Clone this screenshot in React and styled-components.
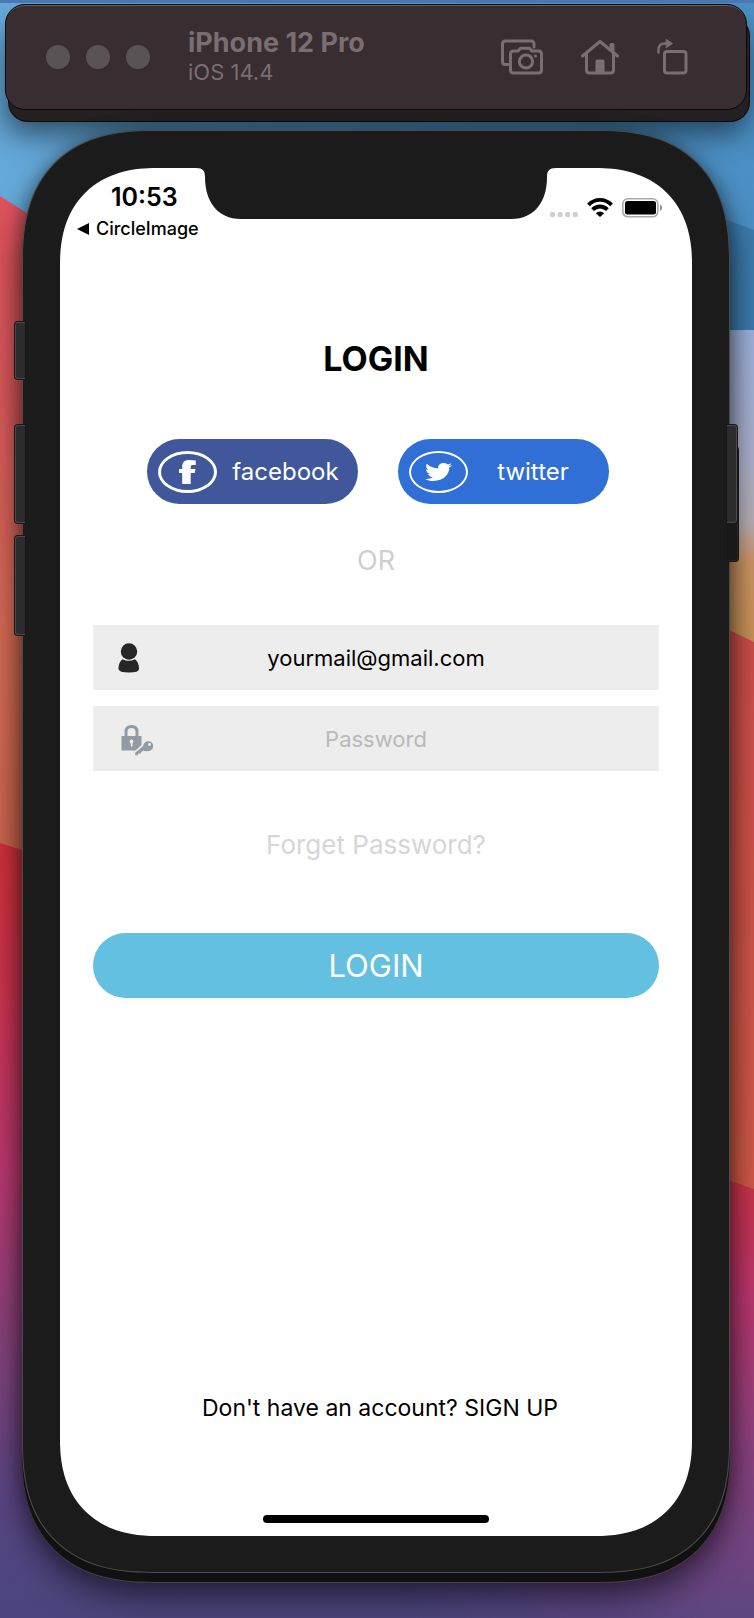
import React from "react";
import styled, { createGlobalStyle } from "styled-components";

const GlobalStyle = createGlobalStyle`
  * { box-sizing: border-box; }
  body { margin: 0; font-family: Inter, "Liberation Sans", sans-serif; }
  button, input { font: inherit; border: 0; margin: 0; padding: 0; background: none; cursor: pointer; }
  input { cursor: text; }
`;

const Desktop = styled.div`
  position: relative;
  min-height: 100vh;
  overflow: hidden;
  padding: 4px 0 45px;
  isolation: isolate;
`;

const WallpaperArt = styled.svg`
  position: absolute;
  inset: 0;
  width: 100%;
  height: 100%;
  z-index: -1;
`;

const Toolbar = styled.header`
  position: relative;
  display: flex;
  align-items: center;
  height: 106px;
  margin: 0 7px 0 5px;
  padding: 0 58px 0 40px;
  border-radius: 20px;
  border: 1px solid #0b090a;
  background: #382d31;
  box-shadow: inset 0 2px 0 -1px #6a6164, 3px 12px 0 -1px #241f21,
    3px 12px 0 0 #0d0c0d, 0 24px 30px rgba(0, 0, 0, 0.55);
`;

const WindowDots = styled.div`
  display: flex;
  gap: 16px;
  margin-right: 38px;
`;

const Dot = styled.button`
  width: 24px;
  height: 24px;
  border-radius: 50%;
  background: #5a5355;
`;

const DeviceTitle = styled.div`
  flex: 1;
  color: #7a6e73;
`;

const DeviceName = styled.div`
  font-size: 27px;
  line-height: 30px;
  font-weight: 700;
`;

const DeviceSystem = styled.div`
  font-size: 22px;
  line-height: 28px;
`;

const ToolGroup = styled.nav`
  display: flex;
  align-items: center;
  gap: 38px;
`;

const ToolButton = styled.button`
  display: flex;
  color: #7a6e73;
`;

const Phone = styled.main`
  position: relative;
  margin: 20px 24px 0 22px;
  padding: 37px 37px 36px;
  border: 1px solid #4c4c4e;
  border-radius: 116px;
  background: #1b1b1b;
  box-shadow: 0 9px 0 0 #111, 0 10px 0 0 #4b4050,
    0 22px 34px rgba(0, 0, 0, 0.6), 0 0 18px rgba(0, 0, 0, 0.35);

  @supports (corner-shape: superellipse(1.3)) {
    border-radius: 132px;
    corner-shape: superellipse(1.3);
  }
`;

const SideKey = styled.span`
  position: absolute;
  top: ${(p) => p.$top}px;
  height: ${(p) => p.$height}px;
  width: 10px;
  ${(p) => p.$side}: -8px;
  border-radius: ${(p) => (p.$side === "left" ? "3px 0 0 3px" : "0 3px 3px 0")};
  border: 1px solid #4a4a4a;
  border-${(p) => (p.$side === "left" ? "right" : "left")}: 0;
  background: #2c2c2c;
  box-shadow: 0 0 0 1px #161616;
`;

const KeyShade = styled(SideKey)`
  right: -9px;
  border-color: #222;
  background: #191919;
`;

const Screen = styled.section`
  display: flex;
  flex-direction: column;
  padding-bottom: 13px;
  border-radius: 84px;
  background: #fff;
  color: #000;

  @supports (corner-shape: superellipse(1.2)) {
    border-radius: 96px;
    corner-shape: superellipse(1.2);
  }
`;

const StatusBar = styled.div`
  display: grid;
  grid-template-columns: 1fr 342px 1fr;
  height: 84px;
`;

const StatusLeft = styled.div`
  padding: 13px 0 0 17px;
  white-space: nowrap;
`;

const Time = styled.div`
  padding-left: 34px;
  font-size: 25px;
  line-height: 32px;
  font-weight: 600;
`;

const BackLink = styled.a`
  display: flex;
  align-items: center;
  gap: 7px;
  color: inherit;
  text-decoration: none;
  font-size: 18px;
  line-height: 32px;
  font-weight: 500;
`;

const Notch = styled.svg`
  margin: -1px -9px 0;
`;

const StatusRight = styled.div`
  display: flex;
  justify-content: flex-end;
  align-items: flex-start;
  gap: 9px;
  padding: 30px 30px 0 0;
`;

const Title = styled.h1`
  margin: 87px 0 60px;
  text-align: center;
  font-size: 34px;
  line-height: 40px;
  font-weight: 700;
`;

const SocialRow = styled.div`
  display: flex;
  justify-content: center;
  gap: 40px;
  padding-left: 4px;
`;

const SocialButton = styled.button`
  display: flex;
  align-items: center;
  width: 211px;
  height: 65px;
  padding: 0 ${(p) => p.$end}px 0 11px;
  border-radius: 33px;
  background: ${(p) => p.$color};
  color: #fff;
  font-size: 24px;
`;

const Badge = styled.span`
  display: flex;
  align-items: center;
  justify-content: center;
  flex: none;
  width: 59px;
  height: 42px;
  border: ${(p) => p.$ring}px solid #fff;
  border-radius: 50%;
`;

const SocialLabel = styled.span`
  flex: 1;
  text-align: center;
`;

const Divider = styled.p`
  margin: 41px 0 48px;
  text-align: center;
  color: #cfcfcf;
  font-size: 27px;
  line-height: 32px;
`;

const LoginForm = styled.form`
  display: flex;
  flex-direction: column;
  padding: 0 33px;
`;

const Field = styled.label`
  display: grid;
  grid-template-columns: 66px 1fr 66px;
  align-items: center;
  height: 65px;
  margin-bottom: 16px;
  background: #ededed;
`;

const FieldIcon = styled.svg`
  margin-left: 25px;
`;

const TextInput = styled.input`
  width: 100%;
  height: 65px;
  outline: 0;
  text-align: center;
  color: #000;
  font-size: 22px;
  &::placeholder { color: #b9b9b9; opacity: 1; }
`;

const ForgotLink = styled.a`
  align-self: center;
  margin: 42px 0 72px;
  color: #d6d6d6;
  text-decoration: none;
  font-size: 26px;
  line-height: 32px;
`;

const SubmitButton = styled.button`
  height: 65px;
  border-radius: 33px;
  background: #63c0e0;
  color: #fff;
  font-size: 31px;
`;

const SignUpLink = styled.a`
  align-self: center;
  margin: 394px 0 91px;
  padding-left: 8px;
  color: #000;
  text-decoration: none;
  font-size: 23px;
  line-height: 32px;
`;

const HomeIndicator = styled.div`
  align-self: center;
  width: 226px;
  height: 8px;
  border-radius: 4px;
  background: #000;
`;

function Wallpaper() {
  return (
    <WallpaperArt viewBox="0 0 754 1618" preserveAspectRatio="none" aria-hidden="true">
      <defs>
        <linearGradient id="sky" x1="0" y1="0" x2="1" y2="0">
          <stop offset="0" stopColor="#65a9da" />
          <stop offset="1" stopColor="#4b8fc4" />
        </linearGradient>
        <linearGradient id="coral" gradientUnits="userSpaceOnUse" x1="0" y1="195" x2="0" y2="860">
          <stop offset="0" stopColor="#dd525e" />
          <stop offset="0.3" stopColor="#d8585c" />
          <stop offset="0.7" stopColor="#d46c53" />
          <stop offset="1" stopColor="#cc6450" />
        </linearGradient>
        <linearGradient id="dusk" gradientUnits="userSpaceOnUse" x1="0" y1="843" x2="0" y2="1618">
          <stop offset="0" stopColor="#d0323a" />
          <stop offset="0.2" stopColor="#cc3350" />
          <stop offset="0.43" stopColor="#ba3972" />
          <stop offset="0.65" stopColor="#85437c" />
          <stop offset="0.85" stopColor="#594684" />
          <stop offset="1" stopColor="#4a457c" />
        </linearGradient>
        <linearGradient id="lilac" gradientUnits="userSpaceOnUse" x1="0" y1="330" x2="0" y2="650">
          <stop offset="0" stopColor="#9fb2de" />
          <stop offset="0.4" stopColor="#abb1cc" />
          <stop offset="0.6" stopColor="#b5aeb5" />
          <stop offset="0.72" stopColor="#cc9565" />
          <stop offset="1" stopColor="#c99055" />
        </linearGradient>
        <linearGradient id="brick" gradientUnits="userSpaceOnUse" x1="0" y1="630" x2="0" y2="1190">
          <stop offset="0" stopColor="#cd4e49" />
          <stop offset="1" stopColor="#d05a49" />
        </linearGradient>
        <linearGradient id="magenta" gradientUnits="userSpaceOnUse" x1="0" y1="1178" x2="0" y2="1618">
          <stop offset="0" stopColor="#cc3347" />
          <stop offset="0.25" stopColor="#bd366d" />
          <stop offset="0.6" stopColor="#8e4280" />
          <stop offset="1" stopColor="#5f4680" />
        </linearGradient>
        <linearGradient id="fade" gradientUnits="userSpaceOnUse" x1="400" y1="0" x2="720" y2="0">
          <stop offset="0" stopColor="#000" />
          <stop offset="1" stopColor="#fff" />
        </linearGradient>
        <mask id="fadeMask" maskUnits="userSpaceOnUse" x="0" y="0" width="754" height="1618">
          <rect width="754" height="1618" fill="url(#fade)" />
        </mask>
      </defs>
      <rect width="754" height="1618" fill="url(#sky)" />
      <rect width="754" height="3" fill="#4a7ab2" />
      <path d="M0 196L60 234V900H0Z" fill="url(#coral)" />
      <path d="M0 843L60 862L600 1300H754V1618H0Z" fill="url(#dusk)" />
      <path d="M700 210L754 230V340H700Z" fill="#3c7bad" />
      <path d="M700 330H754V660H700Z" fill="url(#lilac)" />
      <path d="M700 616L754 642V1200H700Z" fill="url(#brick)" />
      <path d="M700 1170L754 1189V1618H400V1500Z" fill="url(#magenta)" mask="url(#fadeMask)" />
    </WallpaperArt>
  );
}

const ScreenshotIcon = () => (
  <svg width="42" height="36" viewBox="0 0 42 36" fill="none" stroke="currentColor" strokeWidth="3" strokeLinejoin="round" strokeLinecap="round">
    <path d="M7 25.500H4.500Q1.500 25.500 1.500 22.500V5Q1.500 2 4.500 2H30Q33 2 33 5V8" />
    <path d="M12.500 12H17L19.500 9.200H28.500L31 12H37.500Q40.500 12 40.500 15V31Q40.500 34 37.500 34H12.500Q9.500 34 9.500 31V15Q9.500 12 12.500 12Z" />
    <circle cx="25" cy="22.500" r="6.600" />
    <circle cx="34.500" cy="17" r="1.600" fill="currentColor" stroke="none" />
  </svg>
);

const HomeIcon = () => (
  <svg width="38" height="36" viewBox="0 0 38 36" fill="none" stroke="currentColor" strokeWidth="3" strokeLinejoin="round" strokeLinecap="round">
    <path d="M1.500 17L19 2.500L36.500 17" />
    <path d="M5.500 15V31Q5.500 34 8.500 34H29.500Q32.500 34 32.500 31V15" />
    <path d="M30 10V5.500H32V12" />
    <path d="M14.500 34V22Q14.500 20.500 16 20.500H22Q23.500 20.500 23.500 22V34Z" fill="currentColor" stroke="none" />
  </svg>
);

const RotateIcon = () => (
  <svg width="31" height="36" viewBox="0 0 31 36" fill="none" stroke="currentColor" strokeWidth="3" strokeLinejoin="round" strokeLinecap="round">
    <rect x="7.500" y="12.500" width="21.500" height="21.500" rx="2.500" />
    <path d="M1.500 13.500V11Q1.500 4.500 8 4.500H10" strokeWidth="2.400" />
    <path d="M9.500 0.500L15.500 4.500L9.500 8.500Z" fill="currentColor" strokeWidth="1" />
  </svg>
);

const FacebookMark = () => (
  <svg width="17" height="24" viewBox="0 0 16 24" preserveAspectRatio="none" fill="#fff">
    <path d="M3 24V13H0V9H3V7C3 2.500 5 0 9.500 0Q13 0 15.800 .4V5H12.500Q11 5 11 7V9H15.500L14.800 13H11V24Z" />
  </svg>
);

const TwitterMark = () => (
  <svg width="27" height="18" viewBox="0 48 512 416" preserveAspectRatio="none" fill="#fff">
    <path d="M459.37 151.716c.325 4.548.325 9.097.325 13.645 0 138.72-105.583 298.558-298.558 298.558-59.452 0-114.68-17.219-161.137-47.106 8.447.974 16.568 1.299 25.34 1.299 49.055 0 94.213-16.568 130.274-44.832-46.132-.975-84.792-31.188-98.112-72.772 6.498.974 12.995 1.624 19.818 1.624 9.421 0 18.843-1.300 27.614-3.573-48.081-9.747-84.143-51.980-84.143-102.985v-1.299c13.969 7.797 30.214 12.670 47.431 13.319-28.264-18.843-46.781-51.005-46.781-87.391 0-19.492 5.197-37.360 14.294-52.954 51.655 63.675 129.300 105.258 216.365 109.807-1.624-7.797-2.599-15.918-2.599-24.040 0-57.828 46.782-104.934 104.934-104.934 30.213 0 57.502 12.670 76.670 33.137 23.715-4.548 46.456-13.320 66.599-25.340-7.798 24.366-24.366 44.833-46.132 57.827 21.117-2.273 41.584-8.122 60.426-16.243-14.292 20.791-32.161 39.308-52.628 54.253z" />
  </svg>
);

function StatusIcons() {
  return (
    <StatusRight>
      <svg width="28" height="19" viewBox="0 0 28 19" fill="#cfcfcf">
        <rect x="0" y="14" width="5" height="5" rx="1.500" />
        <rect x="7.600" y="14" width="5" height="5" rx="1.500" />
        <rect x="15.200" y="14" width="5" height="5" rx="1.500" />
        <rect x="22.800" y="14" width="5" height="5" rx="1.500" />
      </svg>
      <svg width="26" height="19" viewBox="0 0 26 19" fill="none" stroke="#000" strokeWidth="3.800">
        <path d="M1.400 6.900Q6.500 1.900 13 1.900T24.600 6.900" />
        <path d="M5.600 11.700Q8.800 8.500 13 8.500T20.400 11.700" />
        <path d="M13 19L8.800 15.200Q13 12 17.200 15.200Z" fill="#000" stroke="none" />
      </svg>
      <svg width="40" height="20" viewBox="0 0 40 20">
        <rect x="0.800" y="0.800" width="35" height="18" rx="5" fill="none" stroke="#a9a9a9" strokeWidth="1.600" />
        <rect x="3" y="3" width="31" height="13.600" rx="2.500" fill="#000" />
        <path d="M38 6.500Q40 7.500 40 9.800T38 13Z" fill="#8d8d8d" />
      </svg>
    </StatusRight>
  );
}

function UserIcon() {
  return (
    <FieldIcon width="22" height="30" viewBox="0 0 22 30" fill="#262626" aria-hidden="true">
      <ellipse cx="11" cy="8.500" rx="8.200" ry="8.300" />
      <path d="M4.500 16.200Q10.500 19.500 17 16.200Q21 19 21 26Q21 29.500 11 29.500T.5 26Q.5 19 4.500 16.200Z" />
    </FieldIcon>
  );
}

function LockIcon() {
  return (
    <FieldIcon width="36" height="36" viewBox="-2 -1 36 36" fill="#919ba3" aria-hidden="true">
      <path d="M6 14V9.500Q6 4.500 11.500 4.500T17 9.500V14" fill="none" stroke="#919ba3" strokeWidth="3" />
      <path d="M1.500 14H21.500V23L15.500 28.500H1.500Z" />
      <circle cx="11.500" cy="19.500" r="1.900" fill="#ededed" />
      <path d="M10.800 20H12.500V24.500H10.800Z" fill="#ededed" />
      <path d="M23.200 24A5 5 0 1 1 27 29Q25 29.500 23.500 28.600L21.500 30L20.500 31.500L18.500 31.500L17.500 33.200H15.200V30.800Z" />
      <circle cx="29.500" cy="22.500" r="1.400" fill="#ededed" />
    </FieldIcon>
  );
}

export default function App() {
  return (
    <Desktop>
      <GlobalStyle />
      <Wallpaper />
      <Toolbar>
        <WindowDots>
          <Dot aria-label="Close" />
          <Dot aria-label="Minimize" />
          <Dot aria-label="Zoom" />
        </WindowDots>
        <DeviceTitle>
          <DeviceName>iPhone 12 Pro</DeviceName>
          <DeviceSystem>iOS 14.4</DeviceSystem>
        </DeviceTitle>
        <ToolGroup>
          <ToolButton aria-label="Take screenshot"><ScreenshotIcon /></ToolButton>
          <ToolButton aria-label="Home"><HomeIcon /></ToolButton>
          <ToolButton aria-label="Rotate"><RotateIcon /></ToolButton>
        </ToolGroup>
      </Toolbar>

      <Phone>
        <SideKey $side="left" $top={191} $height={57} />
        <SideKey $side="left" $top={294} $height={98} />
        <SideKey $side="left" $top={405} $height={99} />
        <KeyShade $side="right" $top={316} $height={114} />
        <SideKey $side="right" $top={294} $height={98} />
        <Screen>
          <StatusBar>
            <StatusLeft>
              <Time>10:53</Time>
              <BackLink href="#back">
                <svg width="12" height="12" viewBox="0 0 12 12"><path d="M0 6L12 0V12Z" /></svg>
                CircleImage
              </BackLink>
            </StatusLeft>
            <Notch width="360" height="53" viewBox="0 0 360 53" fill="#1b1b1b">
              <path d="M0 0V1C7 1 9 4 9 10C9 34 21 52 45 52H315C339 52 351 34 351 10C351 4 353 1 360 1V0Z" />
            </Notch>
            <StatusIcons />
          </StatusBar>

          <Title>LOGIN</Title>
          <SocialRow>
            <SocialButton $color="#40589b" $end={4}>
              <Badge $ring={3}><FacebookMark /></Badge>
              <SocialLabel>facebook</SocialLabel>
            </SocialButton>
            <SocialButton $color="#2f6fd6" $end={11}>
              <Badge $ring={2}><TwitterMark /></Badge>
              <SocialLabel>twitter</SocialLabel>
            </SocialButton>
          </SocialRow>
          <Divider>OR</Divider>

          <LoginForm onSubmit={(e) => e.preventDefault()}>
            <Field>
              <UserIcon />
              <TextInput type="email" aria-label="Email" defaultValue="yourmail@gmail.com" />
            </Field>
            <Field>
              <LockIcon />
              <TextInput type="password" aria-label="Password" placeholder="Password" />
            </Field>
            <ForgotLink href="#forgot">Forget Password?</ForgotLink>
            <SubmitButton type="submit">LOGIN</SubmitButton>
          </LoginForm>

          <SignUpLink href="#signup">Don't have an account? SIGN UP</SignUpLink>
          <HomeIndicator />
        </Screen>
      </Phone>
    </Desktop>
  );
}
